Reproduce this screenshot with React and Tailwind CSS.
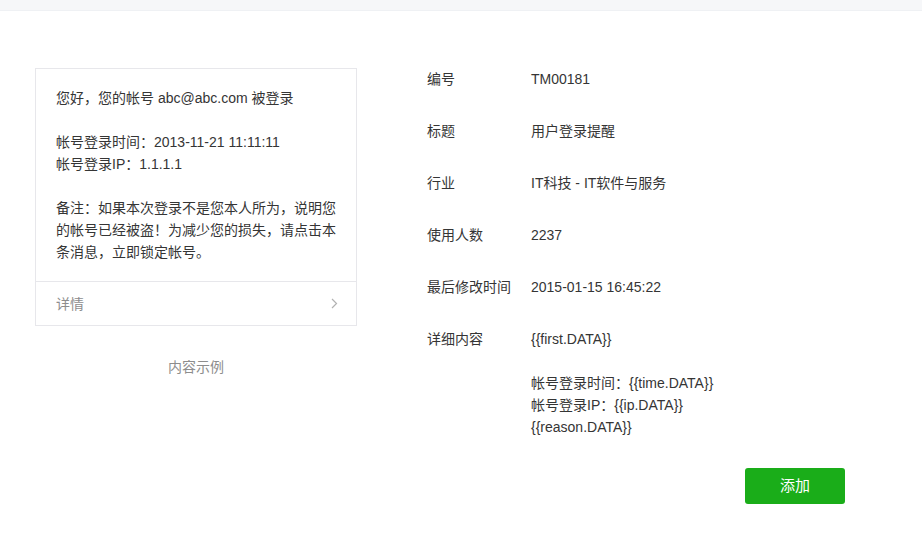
import React from "react";

const font = { fontFamily: '"Liberation Sans", Arial, "Noto Sans CJK SC", sans-serif' };

function Row({ label, children }) {
  return (
    <div className="flex mb-[30px]">
      <div className="w-[104px] shrink-0 text-[#353535]">{label}</div>
      <div className="text-[#353535]">{children}</div>
    </div>
  );
}

export default function App() {
  return (
    <div className="min-h-[539px] w-[922px] bg-white text-[14px] leading-[22px]" style={font}>
      <div className="h-[11px] bg-[#f6f7f9] border-b border-[#eff1f4]" />
      <div className="flex pt-[57px]">
        <div className="ml-[35px] w-[322px] shrink-0">
          <div className="border border-[#e7e7eb] bg-white">
            <div className="px-[20px] pt-[18px] pb-[18px] text-[#353535]">
              <div>您好，您的帐号 abc@abc.com 被登录</div>
              <div className="h-[22px]" />
              <div>帐号登录时间：2013-11-21 11:11:11</div>
              <div>帐号登录IP：1.1.1.1</div>
              <div className="h-[22px]" />
              <div className="whitespace-nowrap">备注：如果本次登录不是您本人所为，说明您</div>
              <div className="whitespace-nowrap">的帐号已经被盗！为减少您的损失，请点击本</div>
              <div className="whitespace-nowrap">条消息，立即锁定帐号。</div>
            </div>
            <div className="flex h-[44px] items-center justify-between border-t border-[#e7e7eb] px-[20px] text-[#8d8d8d]">
              <span>详情</span>
              <svg width="7" height="11" viewBox="0 0 7 11" className="mr-[-2px]">
                <path d="M1 1l4.5 4.5L1 10" fill="none" stroke="#b2b2b2" strokeWidth="1.2" />
              </svg>
            </div>
          </div>
          <div className="mt-[30px] text-center text-[#8d8d8d]">内容示例</div>
        </div>
        <div className="ml-[70px] w-[418px]">
          <Row label="编号">TM00181</Row>
          <Row label="标题">用户登录提醒</Row>
          <Row label="行业">IT科技 - IT软件与服务</Row>
          <Row label="使用人数">2237</Row>
          <Row label="最后修改时间">2015-01-15 16:45:22</Row>
          <div className="flex">
            <div className="w-[104px] shrink-0 text-[#353535]">详细内容</div>
            <div className="text-[#353535]">
              <div>{"{{first.DATA}}"}</div>
              <div className="h-[22px]" />
              <div>帐号登录时间：{"{{time.DATA}}"}</div>
              <div>帐号登录IP：{"{{ip.DATA}}"}</div>
              <div>{"{{reason.DATA}}"}</div>
            </div>
          </div>
          <div className="mt-[30px] flex justify-end">
            <button className="h-[36px] w-[100px] rounded-[3px] bg-[#1aad19] text-[15px] text-white">
              添加
            </button>
          </div>
        </div>
      </div>
    </div>
  );
}
